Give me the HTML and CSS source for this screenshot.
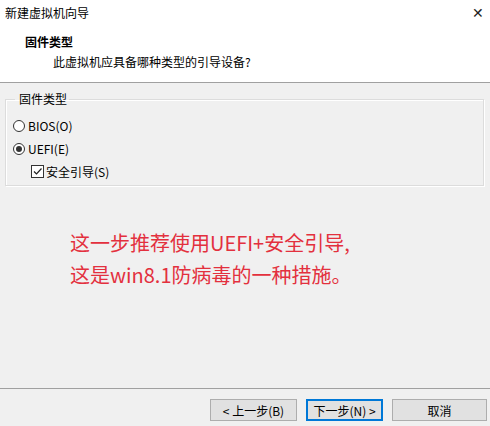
FILE: index.html
```html
<!DOCTYPE html>
<html lang="zh-CN">
<head>
    <meta charset="UTF-8">
    <title>新建虚拟机向导</title>
    <link rel="stylesheet" href="styles.css">
</head>
<body>
    <div class="dialog">
        <div class="top">
            <div class="titlebar">
                <span class="title">新建虚拟机向导</span>
                <span class="close">✕</span>
            </div>
            <div class="page-head">
                <div class="page-title">固件类型</div>
                <div class="page-sub">此虚拟机应具备哪种类型的引导设备?</div>
            </div>
        </div>

        <div class="body">
            <fieldset class="group">
                <legend>固件类型</legend>
                <label class="opt"><span class="radio"></span>BIOS(O)</label>
                <label class="opt"><span class="radio checked"></span>UEFI(E)</label>
                <label class="opt sub">
                    <span class="check">
                        <svg width="11" height="11" viewBox="0 0 11 11"><path d="M2 5.5 L4.5 8 L9.5 2.5" fill="none" stroke="#222" stroke-width="1.2"/></svg>
                    </span>安全引导(S)
                </label>
            </fieldset>

            <div class="note">
                <p>这一步推荐使用UEFI+安全引导,</p>
                <p>这是win8.1防病毒的一种措施。</p>
            </div>
        </div>

        <div class="footer">
            <button class="btn">&lt; 上一步(B)</button>
            <button class="btn primary">下一步(N) &gt;</button>
            <button class="btn cancel">取消</button>
        </div>
    </div>
</body>
</html>
```

FILE: styles.css
```css
* {
    margin: 0;
    padding: 0;
    box-sizing: border-box;
}

:root {
    --face: #f0f0f0;
    --line: #a0a0a0;
    --text: #000000;
    --red: #e3303e;
    --blue: #0078d7;
}

body {
    width: 490px;
    height: 426px;
    overflow: hidden;
    background: var(--face);
    color: var(--text);
    font-family: "Noto Sans CJK SC", "Noto Sans", sans-serif;
    font-size: 12px;
}

.dialog {
    display: flex;
    flex-direction: column;
    height: 426px;
}

.top {
    background: #ffffff;
    height: 83px;
    border-bottom: 1px solid var(--line);
}

.titlebar {
    display: flex;
    justify-content: space-between;
    align-items: center;
    height: 24px;
    padding: 0 6px 0 5px;
}

.title {
    font-size: 12px;
}

.close {
    font-size: 14px;
    color: #222;
}

.page-head {
    padding: 8px 0 0 25px;
}

.page-title {
    font-weight: bold;
    line-height: 20px;
}

.page-sub {
    padding-left: 28px;
    line-height: 20px;
}

.body {
    flex: 1;
    padding: 8px 6px 0 5px;
    border-bottom: 1px solid var(--line);
}

.group {
    border: 1px solid #dcdcdc;
    box-shadow: inset 1px 1px 0 #ffffff, 1px 1px 0 #ffffff;
    height: 95px;
    padding: 10px 0 0 7px;
    display: flex;
    flex-direction: column;
    gap: 6px;
}

.group legend {
    margin-left: 2px;
    padding: 0 2px 0 4px;
    line-height: 16px;
}

.opt {
    display: flex;
    align-items: center;
    height: 17px;
    gap: 3px;
}

.opt.sub {
    padding-left: 18px;
    gap: 2px;
}

.radio {
    width: 12px;
    height: 12px;
    border: 1px solid #333;
    border-radius: 50%;
    background: #fff;
    display: flex;
    align-items: center;
    justify-content: center;
}

.radio.checked::after {
    content: "";
    width: 6px;
    height: 6px;
    border-radius: 50%;
    background: #333;
}

.check {
    width: 13px;
    height: 13px;
    border: 1px solid #333;
    background: #fff;
    display: flex;
    align-items: center;
    justify-content: center;
}

.note {
    padding: 41px 0 0 65px;
    color: var(--red);
    font-size: 20px;
    line-height: 32px;
}

.footer {
    height: 37px;
    display: flex;
    align-items: flex-start;
    padding: 10px 0 0 210px;
    gap: 9px;
}

.btn {
    height: 22px;
    font-family: "Noto Sans CJK SC", "Noto Sans", sans-serif;
    font-size: 12px;
    background: #e1e1e1;
    border: 1px solid #adadad;
    color: #000;
    width: 87px;
}

.btn.primary {
    width: 77px;
    border: 2px solid var(--blue);
}

.btn.cancel {
    width: 95px;
}
```
